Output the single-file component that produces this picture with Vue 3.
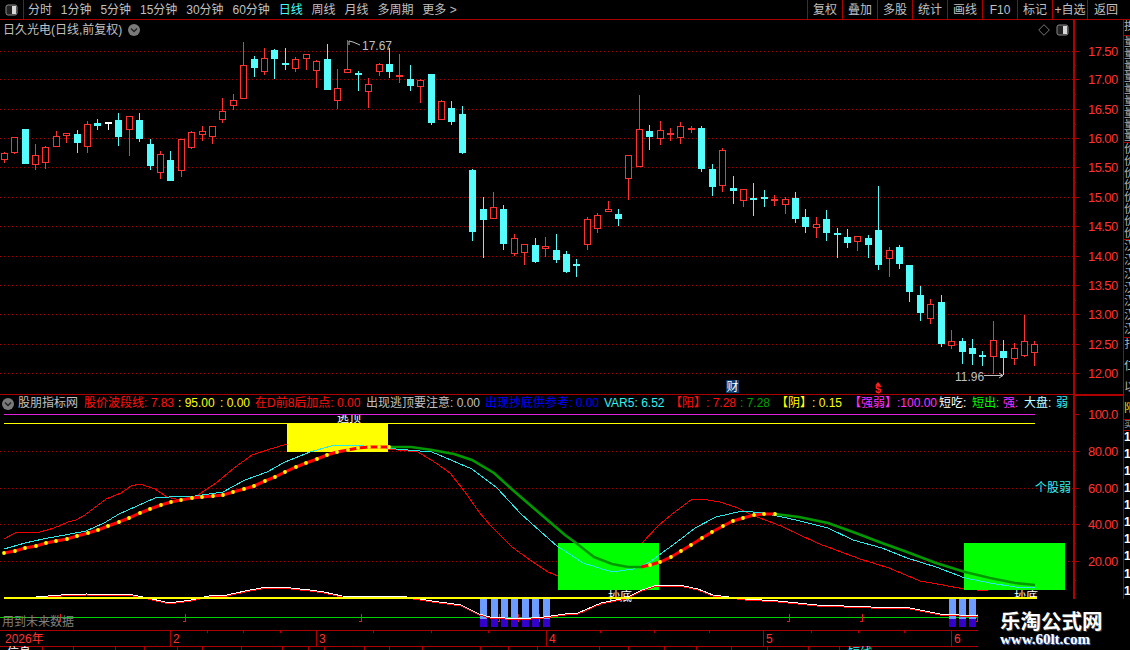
<script setup>
const leftTools = ['分时', '1分钟', '5分钟', '15分钟', '30分钟', '60分钟', '日线', '周线', '月线', '多周期', '更多 >']
const rightTools = ['复权', '叠加', '多股', '统计', '画线', 'F10', '标记', '+自选', '返回']

const raw = `r 152 153 160 163,r 137 137 153 154,c 129 129 164 164,r 144 155 165 170,r 146 147 163 169,r 131 136 147 147,r 133 133 136 143,c 130 134 143 153,r 121 124 147 153,c 119 123 126 130,w 122 122 123 130,c 113 120 137 146,r 116 116 130 156,c 113 120 139 142,c 139 144 166 170,r 151 154 173 179,c 151 160 181 181,r 139 139 171 177,r 131 132 148 149,r 126 131 135 141,r 126 126 137 144,r 98 111 120 123,r 94 100 106 110,r 42 65 99 99,c 56 59 68 77,r 48 58 72 75,c 49 50 59 79,c 48 63 65 70,r 57 59 69 72,r 54 54 59 70,r 60 61 71 88,c 44 59 90 90,r 69 88 101 109,r 40 69 73 73,c 71 73 75 91,r 78 84 92 108,r 63 64 72 76,c 48 64 72 78,r 54 75 77 83,c 65 79 86 91,r 79 80 87 103,c 74 74 123 125,r 100 101 120 120,c 101 108 122 125,c 106 114 153 154,c 169 170 232 241,c 197 209 220 258,r 192 207 219 219,c 205 209 244 250,r 234 238 254 256,r 244 244 253 265,c 238 245 262 263,r 237 246 249 257,c 234 250 260 263,c 251 254 272 273,c 259 264 266 277,r 217 219 245 250,r 213 215 229 233,r 201 209 212 212,c 209 214 219 226,r 155 155 179 200,r 95 129 167 167,c 125 131 137 150,r 121 130 139 145,r 128 133 134 141,r 122 126 138 144,r 126 128 130 133,c 126 128 169 172,c 164 169 187 196,r 148 150 186 192,c 176 188 191 204,r 189 189 201 207,c 183 198 200 216,c 190 197 199 207,r 195 199 201 206,r 197 199 205 214,c 192 198 219 223,c 209 217 227 233,r 217 224 228 238,c 210 219 233 241,c 228 233 235 258,c 229 237 243 248,r 236 236 242 251,c 235 238 245 258,c 186 230 265 270,r 247 250 259 277,c 245 247 264 269,c 265 265 292 302,c 286 295 313 321,r 299 304 319 324,c 295 302 344 347,r 330 341 346 349,c 338 341 352 364,c 339 348 354 365,c 351 355 357 366,r 321 340 357 374,c 340 351 358 375,r 343 348 359 365,r 315 341 356 357,r 341 344 353 366`

const candles = raw.split(',').map((row, i) => {
  const [type, hi, top, bot, lo] = row.split(' ')
  const cx = Math.floor(4.3 + 10.41 * i)
  return { type, hi: +hi, top: +top, bot: +bot, lo: +lo, cx, solid: type !== 'r' || +bot - +top <= 2 }
})

const priceLevels = [
  ['17.50', 51], ['17.00', 79], ['16.50', 109], ['16.00', 138], ['15.50', 167], ['15.00', 197],
  ['14.50', 226], ['14.00', 256], ['13.50', 285], ['13.00', 314], ['12.50', 344], ['12.00', 373]
]
const indLevels = [['80.00', 451], ['60.00', 488], ['40.00', 524], ['20.00', 561]]
const axisLabels = [...priceLevels, ['100.0', 414], ...indLevels]
const minorTicks = [65, 94, 124, 153, 182, 212, 241, 271, 300, 329, 359, 433, 470, 506, 543, 580]

const pts = a => a.map(p => p.join(',')).join(' ')

const thinRed1 = [[4, 539], [15, 533], [25, 532], [40, 532], [54, 528], [68, 522], [76, 520], [85, 515], [106, 499], [121, 493], [131, 486], [140, 484], [155, 489], [167, 497], [180, 500], [195, 497], [216, 483], [234, 468], [252, 455], [267, 450], [287, 444], [330, 442], [388, 449], [418, 452], [436, 463], [450, 473], [465, 492], [479, 512], [490, 525], [512, 547], [530, 560], [548, 572], [558, 576], [600, 580], [642, 543], [659, 525], [671, 515], [691, 500], [702, 499], [720, 502], [738, 508], [752, 515], [781, 526], [817, 543], [860, 559], [889, 568], [920, 581], [943, 585], [964, 589]]
const cyan = [[4, 549], [25, 543], [43, 539], [65, 535], [86, 531], [104, 523], [119, 514], [137, 506], [155, 498], [169, 497], [195, 496], [223, 492], [245, 480], [267, 472], [285, 462], [310, 452], [331, 446], [353, 445], [375, 447], [396, 449], [432, 452], [472, 469], [497, 488], [521, 514], [540, 531], [558, 547], [565, 551], [583, 563], [612, 572], [633, 569], [650, 562], [659, 555], [677, 542], [695, 528], [716, 517], [742, 511], [763, 513], [796, 520], [828, 528], [853, 540], [882, 548], [907, 558], [936, 567], [965, 578], [990, 583], [1015, 587], [1035, 587]]
const riseA = [[4, 553], [15, 551], [25, 548], [36, 546], [46, 543], [56, 541], [67, 539], [77, 536], [88, 533], [98, 530], [108, 526], [119, 522], [129, 518], [140, 513], [150, 509], [161, 505], [171, 502], [181, 500], [192, 498], [202, 497], [213, 496], [223, 495], [233, 492], [244, 489], [254, 486], [265, 481], [275, 477], [285, 472], [296, 467], [306, 463], [317, 459], [327, 455], [337, 452], [348, 450], [358, 448], [369, 447], [379, 447], [389, 447]]
const fallA = [[389, 447], [411, 447], [432, 450], [454, 454], [472, 460], [494, 473], [515, 492], [537, 511], [565, 535], [576, 543], [594, 557], [612, 564], [628, 567], [641, 567]]
const riseB = [[641, 567], [650, 565], [660, 562], [671, 557], [681, 551], [691, 545], [702, 538], [712, 532], [723, 526], [733, 521], [743, 518], [754, 515], [764, 514], [775, 514]]
const fallB = [[775, 514], [799, 517], [828, 523], [853, 532], [882, 543], [907, 552], [936, 563], [965, 572], [990, 578], [1015, 583], [1035, 585]]
const dots = [...riseA, ...riseB.slice(1)]
const lower = [[4, 597], [36, 597], [61, 595], [86, 594], [133, 595], [148, 598], [169, 603], [191, 600], [209, 596], [227, 595], [245, 591], [267, 587], [281, 587], [310, 590], [324, 592], [342, 596], [407, 597], [432, 601], [461, 605], [479, 614], [490, 617], [519, 619], [544, 617], [565, 614], [578, 613], [601, 603], [626, 598], [642, 590], [657, 585], [684, 586], [698, 589], [713, 595], [745, 599], [778, 601], [817, 605], [871, 607], [905, 607], [940, 614], [978, 616]]

const barXs = [480, 491, 501, 511, 522, 532, 543, 949, 959, 969]
const hookXs = [60, 185, 361, 499, 518, 539, 789, 862, 977]
const monthMarks = [[170, '2'], [316, '3'], [546, '4'], [763, '5'], [951, '6']]
const topTicks = [207, 243, 280, 373, 431, 488, 600, 654, 709, 811, 858, 904]
const bottomTicks = [42, 73, 115, 144, 177, 202, 241, 282, 308, 324, 364, 389, 422, 480, 508, 537, 599, 628, 664, 696, 731, 767, 808, 839, 871]

const legend = [
  { t: '股朋指标网', c: 'gray', w: 66 },
  { t: '股价波段线: 7.83', c: 'red', w: 94 },
  { t: ': 95.00', c: 'yellow', w: 42 },
  { t: ': 0.00', c: 'yellow', w: 35 },
  { t: '在D前8后加点: 0.00', c: 'red', w: 111 },
  { t: '出现逃顶要注意: 0.00', c: 'gray', w: 119 },
  { t: '出现抄底供参考: 0.00', c: 'blue', w: 119 },
  { t: 'VAR5: 6.52', c: 'cyan', w: 66 },
  { t: '【阳】: 7.28', c: 'red', w: 70 },
  { t: ': 7.28', c: 'green', w: 36 },
  { t: '【阴】: 0.15', c: 'yellow', w: 73 },
  { t: '【强弱】:100.00', c: 'magenta', w: 90 },
  { t: '短吃:', c: 'white', w: 33 },
  { t: '短出:', c: 'lime', w: 31 },
  { t: '强:', c: 'magenta', w: 21 },
  { t: '大盘:', c: 'pale', w: 32 },
  { t: '弱', c: 'cyan', w: 14 }
]

const tape = [
  { t: '换手', h: 15, c: 'tape-gray', line: true },
  ...Array.from({ length: 9 }, () => ({ t: '量', h: 11.8, c: 'tape-gray' })),
  { t: '', h: 0, c: '', line: true },
  ...Array.from({ length: 8 }, () => ({ t: '价', h: 12, c: 'tape-gray' })),
  { t: '', h: 0, c: '', line: true },
  ...Array.from({ length: 7 }, () => ({ t: '汉', h: 13.8, c: 'tape-gray' })),
  { t: '', h: 0, c: '', line: true },
  { t: '扎', h: 22, c: 'tape-gray' },
  { t: '仁', h: 21, c: 'tape-gray' },
  { t: '以', h: 21, c: 'tape-gray' },
  { t: '阳', h: 17, c: 'tape-yellow', line: true },
  { t: '买', h: 10, c: 'tape-gray tape-tight', line: true },
  ...Array.from({ length: 10 }, () => ({ t: '1', h: 17.1, c: 'tape-white' }))
]
</script>

<template>
  <div class="screen">
    <header class="toolbar">
      <div class="tool-left">
        <div class="panel-btn">
          <svg width="13" height="12" viewBox="0 0 13 12"><rect x="1" y="1" width="11" height="10" rx="2" fill="#222" stroke="#8a8a8a" /><rect x="7" y="2" width="4" height="8" fill="#d8d8d8" /></svg>
        </div>
        <span v-for="t in leftTools" :key="t" class="tool" :class="{ active: t === '日线' }">{{ t }}</span>
      </div>
      <div class="tool-right">
        <span v-for="t in rightTools" :key="t" class="tbtn">{{ t }}</span>
      </div>
    </header>

    <div class="workspace">
      <div class="plots">
        <section class="price">
          <svg class="plot" width="1073" height="374" viewBox="0 20 1073 374">
            <line v-for="l in priceLevels" :key="l[0]" x1="0" x2="1073" :y1="l[1] + .5" :y2="l[1] + .5" class="grid" />
            <g shape-rendering="crispEdges">
              <g v-for="(k, i) in candles" :key="i" :class="'k-' + k.type">
                <line :x1="k.cx + .5" :x2="k.cx + .5" :y1="k.hi" :y2="k.top" class="wick" />
                <line :x1="k.cx + .5" :x2="k.cx + .5" :y1="k.bot" :y2="k.lo" class="wick" />
                <rect v-if="k.solid" :x="k.cx - 3" :y="k.top" width="7" :height="Math.max(k.bot - k.top, 2)" class="solid" />
                <rect v-else :x="k.cx - 2.5" :y="k.top + .5" width="6" :height="k.bot - k.top - 1" class="hollow" />
              </g>
            </g>
            <polyline points="349,45 349,41 353,42 360,45" class="note" />
            <text x="362" y="50" class="note-text">17.67</text>
            <text x="955" y="381" class="note-text">11.96</text>
            <polyline points="984,375.5 1003,375.5" class="note" />
            <polyline points="999,373 1003,375.5 999,378" class="note" />
            <rect x="726" y="380" width="13" height="13" fill="#0b3a6e" />
            <text x="726.5" y="391" class="cai">财</text>
            <polygon points="878,382 875,385.5 881,385.5" fill="#ff2020" />
            <text x="878" y="393" class="dollar">$</text>
          </svg>
          <div class="title">
            <span>日久光电(日线,前复权)</span>
            <svg width="12" height="12" viewBox="0 0 12 12"><circle cx="6" cy="6" r="6" fill="#7a7a7a" /><path d="M3 4.5 6 7.5 9 4.5" fill="none" stroke="#222" stroke-width="1.4" /></svg>
          </div>
          <div class="pane-tools">
            <svg width="12" height="12" viewBox="0 0 12 12"><path d="M6 .7 11.3 6 6 11.3 .7 6Z" fill="none" stroke="#777" /></svg>
            <svg width="13" height="12" viewBox="0 0 13 12"><rect x="1" y="1" width="11" height="10" rx="2" fill="#222" stroke="#8a8a8a" /><rect x="7" y="2" width="4" height="8" fill="#d8d8d8" /></svg>
          </div>
        </section>

        <section class="indicator">
          <svg class="plot" width="1073" height="255" viewBox="0 395 1073 255">
            <line v-for="l in indLevels" :key="l[0]" x1="0" x2="1073" :y1="l[1] + .5" :y2="l[1] + .5" class="grid" />
            <text x="337" y="422" class="tag">逃顶</text>
            <rect x="0" y="395" width="1073" height="19" fill="#000" />
            <line x1="4" x2="1035" y1="414.5" y2="414.5" stroke="#e020e0" />
            <line x1="4" x2="1035" y1="423.5" y2="423.5" stroke="#ffff00" />
            <polyline :points="pts(thinRed1)" class="thin-red" />
            <text x="608" y="601" class="tag">抄底</text>
            <text x="1014" y="601" class="tag">抄底</text>
            <rect x="287" y="423" width="101" height="29" fill="#ffff00" />
            <rect x="558" y="543" width="101" height="47" fill="#00ff00" />
            <rect x="964" y="543" width="101" height="47" fill="#00ff00" />
            <polyline :points="pts(cyan)" class="thin-cyan" />
            <polyline :points="pts(fallA)" class="thick-green" />
            <polyline :points="pts(fallB)" class="thick-green" />
            <polyline :points="pts(riseA)" class="thick-red" />
            <polyline :points="pts(riseB)" class="thick-red" />
            <circle v-for="(d, i) in dots" :key="i" :cx="d[0]" :cy="d[1]" r="1.9" fill="#ffff00" />
            <line x1="977" x2="988" y1="590.5" y2="590.5" stroke="#ff0000" />
            <text x="1035" y="492" class="weak">个股弱</text>

            <line x1="0" x2="978" y1="617.5" y2="617.5" stroke="#00d000" />
            <polyline v-for="x in hookXs" :key="x" :points="`${x}.5,614 ${x}.5,621.5 ${x - 2},621.5`" class="hook" />
            <g shape-rendering="crispEdges">
              <g v-for="x in barXs" :key="x">
                <rect :x="x" y="598" width="7" height="21" fill="#6c9cff" />
                <rect :x="x" y="619" width="7" height="8" fill="#3300cc" />
              </g>
            </g>
            <polyline :points="pts(lower)" class="lower-red" />
            <polyline :points="pts(lower)" class="lower-white" />
            <line x1="4" x2="1037" y1="598" y2="598" stroke="#ffff00" stroke-width="2" shape-rendering="crispEdges" />
            <text x="2" y="626" class="future">用到未来数据</text>

            <line x1="0" x2="978" y1="630.5" y2="630.5" class="axis" />
            <line x1="0" x2="978" y1="646.5" y2="646.5" class="axis" />
            <line v-for="x in topTicks" :key="'t' + x" :x1="x + .5" :x2="x + .5" y1="631" y2="633" class="axis" />
            <line v-for="x in bottomTicks" :key="'b' + x" :x1="x + .5" :x2="x + .5" y1="646" y2="650" class="axis" />
            <text x="5" y="643" class="month">2026年</text>
            <g v-for="m in monthMarks" :key="m[1]">
              <line :x1="m[0] + .5" :x2="m[0] + .5" y1="630" y2="646" class="axis" />
              <text :x="m[0] + 3" y="643" class="month">{{ m[1] }}</text>
            </g>
            <text x="7" y="657" class="tag">信息</text>
            <text x="848" y="657" class="weak">短线</text>
          </svg>
          <div class="legend">
            <svg class="legend-icon" width="12" height="12" viewBox="0 0 12 12"><circle cx="6" cy="6" r="6" fill="#7a7a7a" /><path d="M3 4.5 6 7.5 9 4.5" fill="none" stroke="#222" stroke-width="1.4" /></svg>
            <span v-for="item in legend" :key="item.t" class="legend-item" :class="item.c" :style="{ width: item.w + 'px' }">{{ item.t }}</span>
          </div>
        </section>
      </div>

      <aside class="axis-col">
        <svg width="50" height="580" viewBox="1073 20 50 580">
          <line x1="1073.5" x2="1073.5" y1="20" y2="599" class="axis-main" />
          <line x1="1073" x2="1123" y1="395" y2="395" class="axis-main" />
          <line v-for="l in axisLabels" :key="l[0]" x1="1073" x2="1079" :y1="l[1] + .5" :y2="l[1] + .5" class="axis" />
          <line v-for="y in minorTicks" :key="y" x1="1073" x2="1076" :y1="y + .5" :y2="y + .5" class="axis" />
          <text v-for="l in axisLabels" :key="l[0]" x="1088" :y="l[1] + 5" class="axis-text">{{ l[0] }}</text>
        </svg>
      </aside>

      <aside class="tape">
        <div v-for="(r, i) in tape" :key="i" class="tape-row" :class="[r.c, { ruled: r.line }]" :style="{ height: r.h + 'px' }">{{ r.t }}</div>
      </aside>

      <div class="watermark">
        <div class="wm-cn">乐淘公式网</div>
        <div class="wm-en">www.60lt.com</div>
      </div>
    </div>
  </div>
</template>

<style>
html, body { margin: 0; background: #000; }
</style>

<style scoped>
.screen {
  width: 1130px;
  height: 650px;
  background: #000;
  overflow: hidden;
  display: flex;
  flex-direction: column;
  font-family: "Liberation Sans", "Noto Sans CJK SC", sans-serif;
  font-size: 12px;
  color: #c0c0c0;
}
.toolbar {
  height: 19px;
  flex: none;
  display: flex;
  justify-content: space-between;
  border-bottom: 1px solid #aa0000;
}
.tool-left { display: flex; align-items: center; gap: 8.9px; }
.panel-btn {
  width: 23px;
  height: 19px;
  border-right: 1px solid #aa0000;
  margin-right: -5px;
  display: flex;
  align-items: center;
  justify-content: center;
}
.tool { white-space: nowrap; line-height: 20px; }
.tool.active { color: #40ffff; }
.tool-right { display: flex; }
.tbtn {
  width: 34px;
  border-left: 1px solid #aa0000;
  text-align: center;
  line-height: 20px;
  white-space: nowrap;
}
.tbtn:last-child { width: 43px; text-align: left; padding-left: 6px; box-sizing: border-box; }
.workspace { flex: 1; display: flex; position: relative; min-height: 0; }
.plots { width: 1073px; flex: none; display: flex; flex-direction: column; }
.price { height: 374px; position: relative; flex: none; }
.indicator { height: 256px; position: relative; flex: none; border-top: 1px solid #aa0000; box-sizing: border-box; }
.plot { display: block; }
.title {
  position: absolute;
  left: 3px;
  top: 1px;
  height: 18px;
  display: flex;
  align-items: center;
  gap: 6px;
  line-height: 18px;
}
.pane-tools {
  position: absolute;
  right: 4px;
  top: 4px;
  display: flex;
  align-items: center;
  gap: 6px;
}
.legend {
  position: absolute;
  left: 2px;
  top: 0;
  height: 17px;
  display: flex;
  align-items: center;
  white-space: nowrap;
  line-height: 17px;
}
.legend-icon { margin-right: 4px; flex: none; }
.legend-item { flex: none; }
.red { color: #ff1010; }
.yellow { color: #ffff00; }
.gray { color: #c0c0c0; }
.blue { color: #0000ff; }
.cyan { color: #30f0f0; }
.green { color: #00a000; }
.lime { color: #00ff00; }
.magenta { color: #ff30ff; }
.white { color: #ffffff; }
.pale { color: #c0ffff; }
.grid { stroke: #a00000; stroke-dasharray: 1 3; }
.wick { stroke-width: 1; }
.k-r .wick { stroke: #ff3232; }
.k-c .wick { stroke: #54fcfc; }
.k-w .wick { stroke: #ffffff; }
.k-r .solid { fill: #ff3232; }
.k-c .solid { fill: #54fcfc; }
.k-w .solid { fill: #ffffff; }
.hollow { fill: #000; stroke: #ff3232; }
.note { fill: none; stroke: #c0c0c0; }
.note-text { fill: #c0c0c0; font-size: 12px; }
.cai { fill: #fff; font-size: 12px; }
.dollar { fill: #ff2020; font-size: 11px; font-weight: bold; text-anchor: middle; }
.tag { fill: #ffffff; font-size: 12px; }
.thin-red { fill: none; stroke: #f00000; shape-rendering: crispEdges; }
.thin-cyan { fill: none; stroke: #28e8e8; shape-rendering: crispEdges; }
.thick-green { fill: none; stroke: #009a00; stroke-width: 2.6; }
.thick-red { fill: none; stroke: #ff0000; stroke-width: 3; }
.weak { fill: #30f0f0; font-size: 12px; }
.hook { fill: none; stroke: #e02020; shape-rendering: crispEdges; }
.lower-red { fill: none; stroke: #ff0000; stroke-width: 1; shape-rendering: crispEdges; transform: translateY(1px); }
.lower-white { fill: none; stroke: #ffffff; stroke-width: 1; shape-rendering: crispEdges; }
.future { fill: #808080; font-size: 12px; }
.axis { stroke: #aa0000; shape-rendering: crispEdges; }
.axis-main { stroke: #b00000; stroke-width: 2; shape-rendering: crispEdges; }
.month { fill: #ff3232; font-size: 12px; }
.axis-col { width: 50px; flex: none; }
.axis-col svg { display: block; }
.axis-text { fill: #ff3232; font-size: 13px; letter-spacing: -.6px; }
.tape {
  width: 7px;
  flex: none;
  height: 580px;
  border-left: 1px solid #aa0000;
  box-sizing: border-box;
  overflow: hidden;
}
.tape-row { overflow: hidden; font-size: 12px; line-height: 12px; white-space: nowrap; box-sizing: content-box; }
.tape-row.ruled { border-bottom: 1px solid #aa0000; }
.tape-gray { color: #b0b0b0; }
.tape-yellow { color: #e0e000; }
.tape-white { color: #ffffff; font-weight: bold; }
.tape-tight { font-size: 8px; line-height: 10px; }
.watermark {
  position: absolute;
  left: 978px;
  top: 579px;
  width: 152px;
  height: 52px;
  background: #000;
  padding: 10px 0 0 22px;
  box-sizing: border-box;
  color: #fff;
}
.wm-cn {
  font-family: "Noto Sans CJK SC", sans-serif;
  font-size: 20.5px;
  font-weight: 700;
  line-height: 22px;
  white-space: nowrap;
  text-shadow: 1px 1px 0 #3a3a3a;
}
.wm-en {
  font-family: "Liberation Serif", serif;
  font-size: 15px;
  font-weight: 700;
  line-height: 16px;
  white-space: nowrap;
  text-shadow: 1px 1px 1px #5a7ac8;
}
</style>
